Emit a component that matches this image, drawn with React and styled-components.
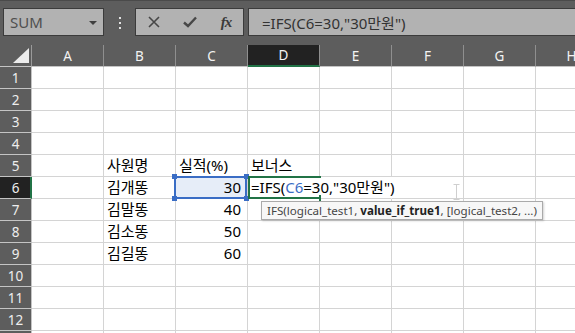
import React from 'react'
import styled, { createGlobalStyle } from 'styled-components'

const GREEN = '#217346'
const BLUE = '#3a6dc5'

const GlobalStyle = createGlobalStyle`
  html, body {
    margin: 0;
    padding: 0;
    background: #5d5d5d;
  }
  body {
    font-family: "Noto Sans", "Noto Sans CJK KR", sans-serif;
  }
`

const COLS = ['A', 'B', 'C', 'D', 'E', 'F', 'G', 'H']
const ROW_COUNT = 13
const LAST_LABELED = 12

const cells = {
  B5: '사원명', C5: '실적(%)', D5: '보너스',
  B6: '김개똥', C6: 30,
  B7: '김말똥', C7: 40,
  B8: '김소똥', C8: 50,
  B9: '김길똥', C9: 60,
}

function App() {
  const rows = []
  for (let r = 1; r <= ROW_COUNT; r++) rows.push(r)

  return (
    <Window>
      <GlobalStyle />
      <Toolbar>
        <NameBox>
          SUM
          <DropArrow />
        </NameBox>
        <Grip>
          <Dot /><Dot /><Dot />
        </Grip>
        <FxBox>
          <FxButton>
            <svg width="12" height="12" viewBox="0 0 12 12">
              <path d="M1 1L11 11M11 1L1 11" stroke="#474747" strokeWidth="1.6" fill="none" />
            </svg>
          </FxButton>
          <FxButton>
            <svg width="14" height="12" viewBox="0 0 14 12">
              <path d="M1 6.5L5 10L13 1.5" stroke="#474747" strokeWidth="2.4" fill="none" />
            </svg>
          </FxButton>
          <FxButton>
            <FxLabel>fx</FxLabel>
          </FxButton>
        </FxBox>
        <FormulaInput>=IFS(C6=30,"30만원")</FormulaInput>
      </Toolbar>

      <Sheet>
        <Corner>
          <svg width="17" height="16" viewBox="0 0 17 16">
            <path d="M16 0L16 15L0 15Z" fill="#ececec" />
          </svg>
        </Corner>
        {COLS.map(c => (
          <ColHead key={c} $active={c === 'D'}>{c}</ColHead>
        ))}

        {rows.map(r => (
          <React.Fragment key={r}>
            <RowHead $active={r === 6}>{r <= LAST_LABELED ? r : ''}</RowHead>
            {COLS.map(c => {
              const id = c + r
              const value = cells[id]
              if (id === 'C6') {
                return (
                  <Cell key={id} $num $selected>
                    {value}
                    <Handle $x="left" $y="top" />
                    <Handle $x="right" $y="top" />
                    <Handle $x="left" $y="bottom" />
                    <Handle $x="right" $y="bottom" />
                  </Cell>
                )
              }
              if (id === 'D6') {
                return (
                  <Cell key={id} $editing>
                    =IFS(<Ref>C6</Ref>=30,"30만원")
                    <Tip>
                      IFS(logical_test1, <TipBold>value_if_true1</TipBold>, [logical_test2, ...)
                    </Tip>
                  </Cell>
                )
              }
              return (
                <Cell key={id} $num={typeof value === 'number'} $spill={id === 'E6'}>
                  {value}
                </Cell>
              )
            })}
          </React.Fragment>
        ))}

        <Cursor>
          <svg width="7" height="16" viewBox="0 0 7 16">
            <path d="M0.5 0.5H6.5M3.5 0.5V15.5M0.5 15.5H6.5" stroke="#cfcfcf" strokeWidth="1" fill="none" />
          </svg>
        </Cursor>
      </Sheet>
    </Window>
  )
}

export default App

const Window = styled.div`
  width: 575px;
  height: 333px;
  overflow: hidden;
  background: #5d5d5d;
  display: flex;
  flex-direction: column;
`

const Toolbar = styled.div`
  height: 45px;
  flex-shrink: 0;
  box-sizing: border-box;
  display: flex;
  align-items: flex-start;
  padding: 8px 0 0 3px;
  border-top: 1px solid #4a4a4a;
  background: #5d5d5d;
`

const NameBox = styled.div`
  width: 101px;
  height: 28px;
  box-sizing: border-box;
  margin-top: -1px;
  border: 1px solid #3b3b3b;
  background: #b2b2b2;
  display: flex;
  align-items: center;
  justify-content: space-between;
  padding: 0 6px;
  font-size: 15px;
  color: #4f4f4f;
`

const DropArrow = styled.span`
  width: 0;
  height: 0;
  border-left: 4px solid transparent;
  border-right: 4px solid transparent;
  border-top: 4px solid #3f3f3f;
  margin-top: 1px;
`

const Grip = styled.div`
  width: 31px;
  height: 28px;
  display: flex;
  flex-direction: column;
  align-items: center;
  justify-content: center;
  gap: 3px;
`

const Dot = styled.span`
  width: 2px;
  height: 2px;
  background: #e2e2e2;
`

const FxBox = styled.div`
  width: 109px;
  height: 28px;
  box-sizing: border-box;
  margin-top: -1px;
  border: 1px solid #3b3b3b;
  background: #b2b2b2;
  display: grid;
  grid-template-columns: 36px 36px 36px;
`

const FxButton = styled.div`
  display: flex;
  align-items: center;
  justify-content: center;
`

const FxLabel = styled.span`
  font-family: "Liberation Serif", serif;
  font-style: italic;
  font-weight: 700;
  font-size: 15px;
  color: #3a3a3a;
  letter-spacing: -1px;
`

const FormulaInput = styled.div`
  flex: 1;
  height: 28px;
  box-sizing: border-box;
  margin: -1px -4px 0 4px;
  border: 1px solid #3b3b3b;
  background: #b2b2b2;
  display: flex;
  align-items: center;
  padding-left: 13px;
  font-size: 15px;
  color: #333;
  white-space: nowrap;
`

const Sheet = styled.div`
  position: relative;
  display: grid;
  grid-template-columns: 32px repeat(8, 72px);
  grid-auto-rows: 22px;
  background: #fff;
`

const Corner = styled.div`
  box-sizing: border-box;
  background: #5d5d5d;
  border-right: 1px solid #9a9a9a;
  border-bottom: 1px solid #c4c4c4;
  display: flex;
  align-items: flex-end;
  justify-content: flex-end;
  padding: 0 1px 2px 0;
`

const ColHead = styled.div`
  box-sizing: border-box;
  background: ${p => (p.$active ? '#222' : '#5d5d5d')};
  border-right: 1px solid #8f8f8f;
  border-bottom: ${p => (p.$active ? `2px solid ${GREEN}` : '1px solid #c4c4c4')};
  color: #f3f3f3;
  font-size: 13.5px;
  display: flex;
  align-items: center;
  justify-content: center;
`

const RowHead = styled.div`
  box-sizing: border-box;
  background: ${p => (p.$active ? '#222' : '#5d5d5d')};
  border-right: ${p => (p.$active ? `2px solid ${GREEN}` : '1px solid #c4c4c4')};
  border-bottom: 1px solid #c4c4c4;
  color: #eeeeee;
  font-size: 13.5px;
  display: flex;
  align-items: center;
  justify-content: center;
  padding-left: ${p => (p.$active ? '1px' : '0')};
`

const Cell = styled.div`
  position: relative;
  z-index: ${p => (p.$editing ? 3 : p.$selected ? 2 : 'auto')};
  box-sizing: border-box;
  border-right: 1px solid ${p => (p.$editing || p.$spill ? 'transparent' : '#d4d4d4')};
  border-bottom: 1px solid #d4d4d4;
  background: ${p => (p.$selected ? '#e6edf8' : p.$editing ? 'transparent' : '#fff')};
  display: flex;
  align-items: center;
  justify-content: ${p => (p.$num ? 'flex-end' : 'flex-start')};
  padding: ${p => (p.$num ? '0 6px 0 0' : '0 0 0 3px')};
  font-size: 15px;
  line-height: 21px;
  color: #000;
  white-space: nowrap;

  ${p => p.$selected && `
    &::after {
      content: "";
      position: absolute;
      top: -1px;
      left: -2px;
      right: 0;
      bottom: -1px;
      border: 2px solid ${BLUE};
      pointer-events: none;
    }
  `}

  ${p => p.$editing && `
    &::after {
      content: "";
      position: absolute;
      top: -1px;
      left: 0;
      right: -2px;
      bottom: -1px;
      border-top: 2px solid ${GREEN};
      border-bottom: 2px solid ${GREEN};
      border-left: 2px solid ${GREEN};
      pointer-events: none;
    }
    &::before {
      content: "";
      position: absolute;
      right: -2px;
      bottom: -3px;
      width: 2px;
      height: 6px;
      background: ${GREEN};
    }
  `}
`

const Handle = styled.span`
  position: absolute;
  width: 5px;
  height: 5px;
  background: ${BLUE};
  z-index: 1;
  ${p => (p.$x === 'left' ? 'left: -4px;' : 'right: -2px;')}
  ${p => (p.$y === 'top' ? 'top: -3px;' : 'bottom: -3px;')}
`

const Ref = styled.span`
  color: #3a6dc5;
`

const Tip = styled.div`
  position: absolute;
  left: 13px;
  top: 24px;
  height: 19px;
  box-sizing: border-box;
  padding: 0 5px;
  background: #f7f7f7;
  border: 1px solid #aaaaaa;
  box-shadow: 1px 1px 2px rgba(0, 0, 0, 0.18);
  display: flex;
  align-items: center;
  font-size: 11.6px;
  color: #454545;
  white-space: pre;
`

const TipBold = styled.b`
  color: #222;
  font-weight: 700;
`

const Cursor = styled.div`
  position: absolute;
  left: 453px;
  top: 139px;
  display: flex;
`
